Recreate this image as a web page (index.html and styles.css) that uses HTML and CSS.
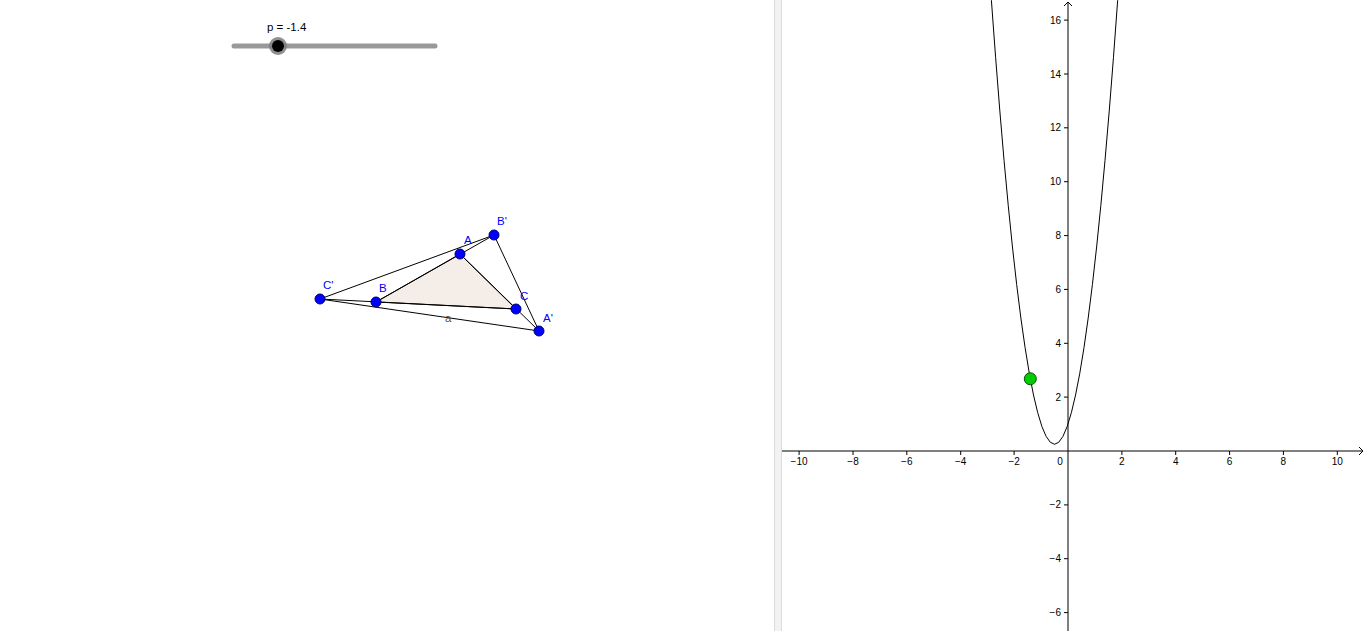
FILE: index.html
```html
<!DOCTYPE html>
<html>
<head>
<meta charset="utf-8">
<link rel="stylesheet" href="styles.css">
</head>
<body>
<div class="app">
  <div class="view left">
    <svg class="canvas" width="774" height="631" viewBox="0 0 774 631">
      <text class="slabel" x="267" y="31">p = -1.4</text>
      <line class="track" x1="234" y1="46" x2="435" y2="46"/>
      <circle class="knob-halo" cx="278" cy="46" r="9"/>
      <circle class="knob" cx="278" cy="46" r="6"/>

      <polygon class="fill" points="460,254 376,302 516,309"/>
      <polygon class="seg" points="494,235 539,331 320,299"/>
      <line class="seg" x1="320" y1="299" x2="516" y2="309"/>
      <line class="seg" x1="494" y1="235" x2="376" y2="302"/>
      <line class="seg" x1="539" y1="331" x2="460" y2="254"/>

      <circle class="pt" cx="494" cy="235" r="5"/>
      <circle class="pt" cx="460" cy="254" r="5"/>
      <circle class="pt" cx="320" cy="299" r="5"/>
      <circle class="pt" cx="376" cy="302" r="5"/>
      <circle class="pt" cx="516" cy="309" r="5"/>
      <circle class="pt" cx="539" cy="331" r="5"/>

      <text class="plabel" x="497" y="225">B'</text>
      <text class="plabel" x="464" y="244">A</text>
      <text class="plabel" x="323" y="289">C'</text>
      <text class="plabel" x="379" y="292">B</text>
      <text class="plabel" x="520" y="300">C</text>
      <text class="plabel" x="543" y="322">A'</text>
      <text class="alabel" x="445" y="322">a</text>
    </svg>
  </div>
  <div class="divider"></div>
  <div class="view right">
    <svg class="canvas" width="584" height="631" viewBox="0 0 584 631">
      <line class="axis" x1="0" y1="451" x2="581" y2="451"/>
      <polyline class="arrow" points="577,447 581,451 577,455"/>
      <line class="axis" x1="286" y1="631" x2="286" y2="2"/>
      <polyline class="arrow" points="282,6 286,2 290,6"/>

      <g class="ticks">
        <line x1="17.1" y1="451" x2="17.1" y2="455"/>
        <line x1="71.0" y1="451" x2="71.0" y2="455"/>
        <line x1="124.8" y1="451" x2="124.8" y2="455"/>
        <line x1="178.7" y1="451" x2="178.7" y2="455"/>
        <line x1="232.1" y1="451" x2="232.1" y2="455"/>
        <line x1="339.9" y1="451" x2="339.9" y2="455"/>
        <line x1="393.7" y1="451" x2="393.7" y2="455"/>
        <line x1="447.6" y1="451" x2="447.6" y2="455"/>
        <line x1="501.4" y1="451" x2="501.4" y2="455"/>
        <line x1="555.3" y1="451" x2="555.3" y2="455"/>

        <line x1="282" y1="20.1" x2="286" y2="20.1"/>
        <line x1="282" y1="74.0" x2="286" y2="74.0"/>
        <line x1="282" y1="127.8" x2="286" y2="127.8"/>
        <line x1="282" y1="181.7" x2="286" y2="181.7"/>
        <line x1="282" y1="235.6" x2="286" y2="235.6"/>
        <line x1="282" y1="289.4" x2="286" y2="289.4"/>
        <line x1="282" y1="343.3" x2="286" y2="343.3"/>
        <line x1="282" y1="397.1" x2="286" y2="397.1"/>
        <line x1="282" y1="504.9" x2="286" y2="504.9"/>
        <line x1="282" y1="558.7" x2="286" y2="558.7"/>
        <line x1="282" y1="612.6" x2="286" y2="612.6"/>
      </g>

      <g class="xlabels">
        <text x="17.1" y="465">−10</text>
        <text x="71.0" y="465">−8</text>
        <text x="124.8" y="465">−6</text>
        <text x="178.7" y="465">−4</text>
        <text x="232.1" y="465">−2</text>
        <text x="278" y="465">0</text>
        <text x="339.9" y="465">2</text>
        <text x="393.7" y="465">4</text>
        <text x="447.6" y="465">6</text>
        <text x="501.4" y="465">8</text>
        <text x="555.3" y="465">10</text>
      </g>
      <g class="ylabels">
        <text x="279" y="23.6">16</text>
        <text x="279" y="77.5">14</text>
        <text x="279" y="131.3">12</text>
        <text x="279" y="185.2">10</text>
        <text x="279" y="239.1">8</text>
        <text x="279" y="292.9">6</text>
        <text x="279" y="346.8">4</text>
        <text x="279" y="400.6">2</text>
        <text x="279" y="508.4">−2</text>
        <text x="279" y="562.2">−4</text>
        <text x="279" y="616.1">−6</text>
      </g>

      <path class="curve" d="M205.21,-60.67 Q272.54,949.2 339.86,-60.67"/>
      <circle class="gpt" cx="248.3" cy="378.8" r="6"/>
    </svg>
  </div>
</div>
</body>
</html>
```
FILE: styles.css
```css
html, body {
  margin: 0;
  padding: 0;
  background: #ffffff;
  overflow: hidden;
}
.app {
  display: flex;
  width: 1366px;
  height: 631px;
  font-family: "Liberation Sans", Arial, sans-serif;
}
.view {
  height: 631px;
  background: #ffffff;
}
.left {
  width: 774px;
}
.right {
  width: 584px;
}
.divider {
  width: 6px;
  background: #f2f2f2;
  border-left: 1px solid #dcdcdc;
  border-right: 1px solid #dcdcdc;
}
.canvas {
  display: block;
}
.slabel {
  font-size: 11.5px;
  fill: #000;
}
.track {
  stroke: #999999;
  stroke-width: 5;
  stroke-linecap: round;
}
.knob-halo {
  fill: #7d7d7d;
  opacity: 0.85;
}
.knob {
  fill: #000000;
}
.fill {
  fill: #f4ede8;
  stroke: #000;
  stroke-width: 1;
}
.seg {
  fill: none;
  stroke: #000;
  stroke-width: 1;
}
.pt {
  fill: #0000ff;
  stroke: #00006e;
  stroke-width: 1;
}
.plabel {
  font-size: 11.5px;
  fill: #0000ff;
}
.alabel {
  font-size: 11.5px;
  fill: #555555;
}
.axis {
  stroke: #000;
  stroke-width: 1;
}
.arrow {
  fill: none;
  stroke: #000;
  stroke-width: 1;
}
.ticks line {
  stroke: #000;
  stroke-width: 1;
}
.xlabels text {
  font-size: 10px;
  fill: #000;
  text-anchor: middle;
}
.ylabels text {
  font-size: 10px;
  fill: #000;
  text-anchor: end;
}
.curve {
  fill: none;
  stroke: #000;
  stroke-width: 1;
}
.gpt {
  fill: #00cc00;
  stroke: #005500;
  stroke-width: 1;
}
```
